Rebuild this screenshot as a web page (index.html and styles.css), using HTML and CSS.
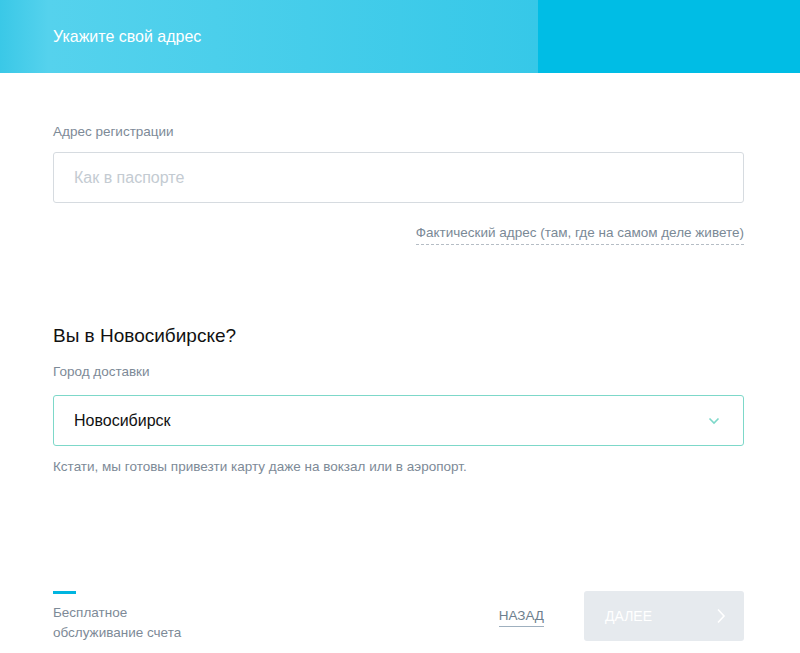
FILE: index.html
```html
<!DOCTYPE html>
<html lang="ru">
<head>
<meta charset="utf-8">
<link rel="stylesheet" href="styles.css">
</head>
<body>
<header class="top">
  <div class="top-main"><h1 class="top-title">Укажите свой адрес</h1></div>
  <div class="top-side"></div>
</header>
<main class="form">
  <label class="label">Адрес регистрации</label>
  <div class="field"><span class="placeholder">Как в паспорте</span></div>
  <div class="link-row"><a class="dashed-link">Фактический адрес (там, где на самом деле живете)</a></div>

  <h2 class="question">Вы в Новосибирске?</h2>
  <label class="label">Город доставки</label>
  <div class="field field-select">
    <span class="value">Новосибирск</span>
    <svg class="chev" width="12" height="8" viewBox="0 0 12 8"><path d="M1.5 1.5 L6 6 L10.5 1.5" fill="none" stroke="#7dd8c9" stroke-width="1.6"/></svg>
  </div>
  <p class="hint">Кстати, мы готовы привезти карту даже на вокзал или в аэропорт.</p>

  <footer class="foot">
    <div class="promo">
      <div class="promo-bar"></div>
      <div class="promo-text">Бесплатное<br>обслуживание счета</div>
    </div>
    <div class="actions">
      <a class="back">НАЗАД</a>
      <button class="next">ДАЛЕЕ
        <svg width="10" height="16" viewBox="0 0 10 16"><path d="M2 1.5 L8 8 L2 14.5" fill="none" stroke="#ffffff" stroke-width="1.6"/></svg>
      </button>
    </div>
  </footer>
</main>
</body>
</html>
```

FILE: styles.css
```css
* { box-sizing: border-box; }
html, body { margin: 0; padding: 0; }
body {
  font-family: "Liberation Sans", Arial, sans-serif;
  background: #ffffff;
  color: #111;
  width: 800px;
  height: 653px;
  overflow: hidden;
}
.top {
  display: flex;
  height: 73px;
}
.top-main {
  width: 538px;
  background: linear-gradient(90deg, #3ac8e7 0%, #55d2ed 9%, #4bcfeb 40%, #36c8e8 100%);
  display: flex;
  align-items: center;
  padding-left: 53px;
}
.top-side {
  flex: 1;
  background: #00bde5;
}
.top-title {
  margin: 0;
  font-family: "Liberation Sans Narrow", "Arial Narrow", "Liberation Sans", sans-serif;
  font-weight: normal;
  font-size: 17px;
  color: #ffffff;
  transform: scaleX(0.94);
  transform-origin: left center;
  white-space: nowrap;
}
.form {
  padding: 51px 56px 0 53px;
  display: flex;
  flex-direction: column;
}
.label {
  display: block;
  font-size: 13.5px;
  line-height: 16px;
  color: #7d8a97;
  margin-bottom: 12px;
}
.field {
  height: 51px;
  border: 1px solid #d6dbe0;
  border-radius: 3px;
  display: flex;
  align-items: center;
  padding: 0 20px;
}
.placeholder {
  font-size: 16px;
  color: #c4cbd2;
}
.link-row {
  display: flex;
  justify-content: flex-end;
  margin-top: 22px;
}
.dashed-link {
  font-size: 13.5px;
  line-height: 16px;
  color: #7a8996;
  border-bottom: 1px dashed #b5bdc5;
  padding-bottom: 3px;
}
.question {
  margin: 80px 0 17px;
  font-size: 19px;
  font-weight: normal;
  line-height: 22px;
  color: #111;
}
.question + .label { margin-bottom: 15px; }
.field-select {
  border-color: #7dd8c9;
  justify-content: space-between;
}
.value {
  font-size: 16px;
  color: #111;
}
.chev { margin-right: 3px; }
.hint {
  margin: 13px 0 0;
  font-size: 13.5px;
  line-height: 16px;
  color: #7d8a97;
}
.foot {
  margin-top: 116px;
  display: flex;
  justify-content: space-between;
  align-items: flex-start;
}
.promo-bar {
  width: 23px;
  height: 3px;
  background: #00b5e0;
}
.promo-text {
  margin-top: 9px;
  font-size: 13.5px;
  line-height: 20px;
  color: #7d8a97;
}
.actions {
  display: flex;
  align-items: center;
}
.back {
  font-size: 13.5px;
  color: #6e7f8e;
  border-bottom: 1px solid #9fb0bf;
  padding-bottom: 3px;
  margin-right: 40px;
  margin-top: 2px;
}
.next {
  width: 160px;
  height: 50px;
  border: none;
  border-radius: 3px;
  background: #e6eaee;
  color: #ffffff;
  font-family: "Liberation Sans", Arial, sans-serif;
  font-size: 14px;
  display: flex;
  align-items: center;
  justify-content: space-between;
  padding: 0 18px 0 21px;
}
```
